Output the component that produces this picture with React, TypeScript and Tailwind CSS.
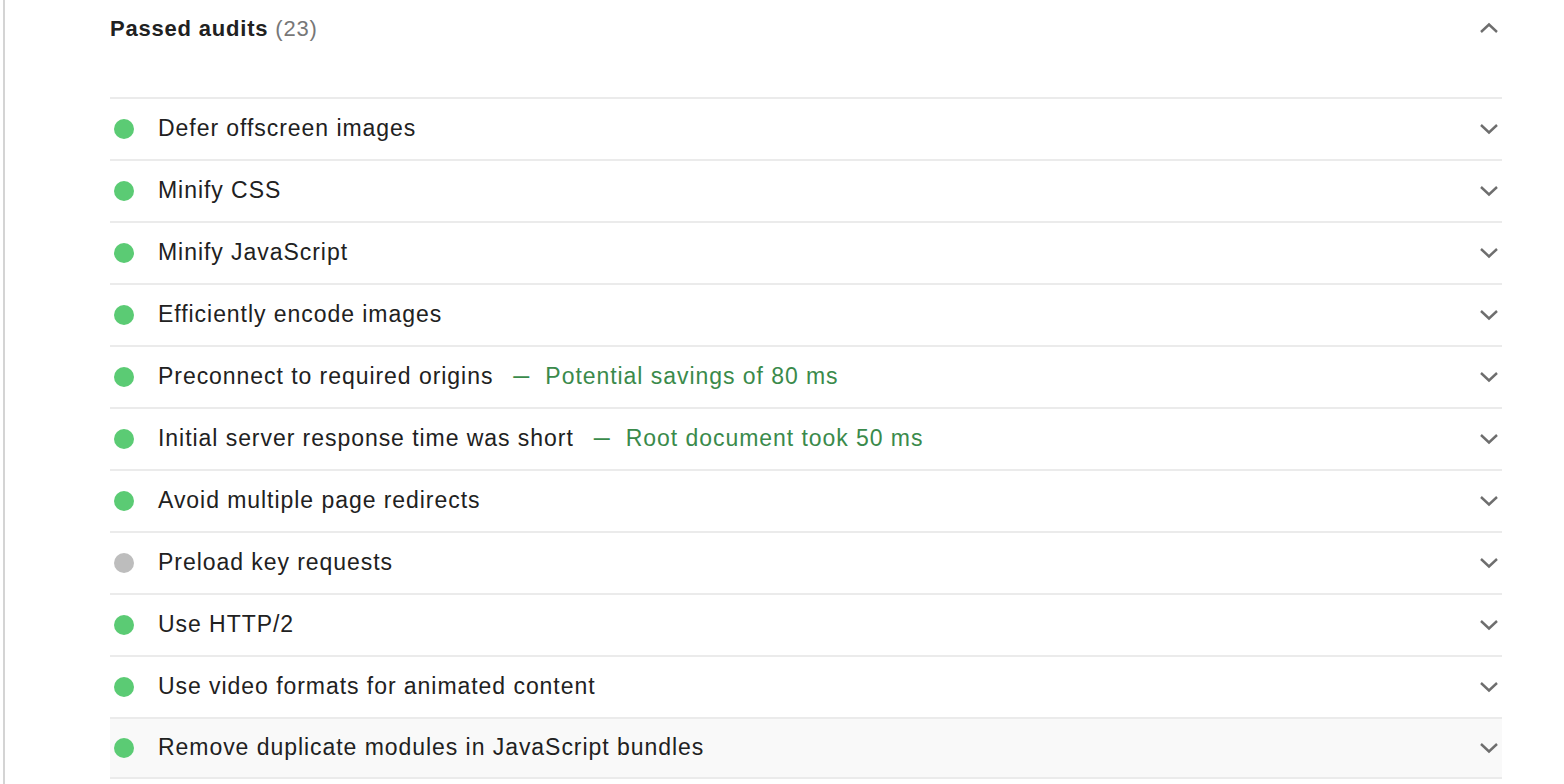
import React from "react";

type Audit = { title: string; detail?: string; status: "pass" | "na" };

const audits: Audit[] = [
  { title: "Defer offscreen images", status: "pass" },
  { title: "Minify CSS", status: "pass" },
  { title: "Minify JavaScript", status: "pass" },
  { title: "Efficiently encode images", status: "pass" },
  { title: "Preconnect to required origins", detail: "Potential savings of 80 ms", status: "pass" },
  { title: "Initial server response time was short", detail: "Root document took 50 ms", status: "pass" },
  { title: "Avoid multiple page redirects", status: "pass" },
  { title: "Preload key requests", status: "na" },
  { title: "Use HTTP/2", status: "pass" },
  { title: "Use video formats for animated content", status: "pass" },
  { title: "Remove duplicate modules in JavaScript bundles", status: "pass" },
];

const Chevron = ({ up }: { up?: boolean }) => (
  <svg width="20" height="12" viewBox="0 0 20 12" className="shrink-0">
    <path
      d={up ? "M2 10 L10 2.5 L18 10" : "M2 2 L10 9.5 L18 2"}
      fill="none"
      stroke="#6e6e6e"
      strokeWidth="2.4"
    />
  </svg>
);

const AuditRow = ({ audit, last }: { audit: Audit; last: boolean }) => (
  <div
    className={`flex h-[62px] items-center border-t-2 border-[#ebebeb] pr-[3px] ${
      last ? "bg-[#f9f9f9] border-b-2" : ""
    }`}
  >
    <span
      className={`ml-1 h-5 w-5 shrink-0 rounded-full ${
        audit.status === "pass" ? "bg-[#5bcb74]" : "bg-[#bdbdbd]"
      }`}
    />
    <div className="ml-6 flex-1 whitespace-nowrap pb-[2px] text-[23px] tracking-[0.95px] text-[#212121]">
      {audit.title}
      {audit.detail && (
        <span className="ml-[20px] text-[#3a8a4b]">
          <span className="mr-[16px] align-[2px] text-[16px] font-bold tracking-normal">—</span>
          {audit.detail}
        </span>
      )}
    </div>
    <Chevron />
  </div>
);

export default function App() {
  return (
    <div
      className="flex h-[784px] w-[1564px] overflow-hidden bg-white"
      style={{ fontFamily: "'Liberation Sans', Arial, sans-serif" }}
    >
      <div className="ml-[3px] w-[2px] shrink-0 bg-[#d4d4d4]" />
      <div className="ml-[105px] w-[1392px]">
        <div className="flex h-[97px] items-start justify-between pt-[12px] pr-[3px]">
          <div className="text-[22px] font-bold tracking-[0.8px] text-[#212121]">
            Passed audits <span className="font-normal text-[#777777]">(23)</span>
          </div>
          <div className="pt-[10px]">
            <Chevron up />
          </div>
        </div>
        {audits.map((a, i) => (
          <AuditRow key={a.title} audit={a} last={i === audits.length - 1} />
        ))}
      </div>
    </div>
  );
}
